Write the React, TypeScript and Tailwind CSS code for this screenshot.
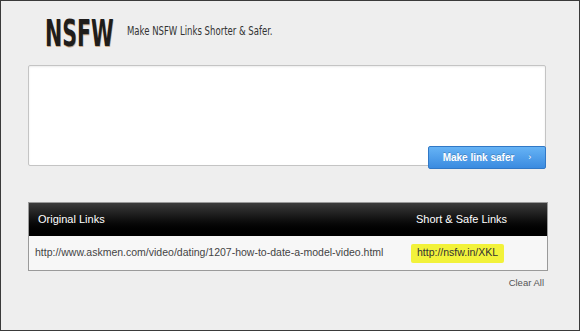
import React from "react";

export default function App() {
  return (
    <div className="w-[580px] h-[331px] overflow-hidden border border-[#3a3a3a] bg-[#eeeeee] font-['Liberation_Sans',Arial,sans-serif]">
      <div className="flex items-center pl-[44px] pt-[14px] h-[36px] box-content">
        <div className="w-[70px] h-[36px] overflow-visible">
          <span className="inline-block origin-left scale-x-[0.6] font-['DejaVu_Sans_Condensed','DejaVu_Sans',sans-serif] font-bold text-[38px] leading-[36px] text-[#1f1d1b] [text-shadow:1px_1px_0_#c9a98a]">
            NSFW
          </span>
        </div>
        <div className="ml-[12px] mt-[-6px] w-[160px] overflow-visible whitespace-nowrap">
          <span className="inline-block origin-left scale-x-[0.79] font-['DejaVu_Sans_Condensed','DejaVu_Sans',sans-serif] text-[12px] text-[#333]">
            Make NSFW Links Shorter &amp; Safer.
          </span>
        </div>
      </div>

      <div className="relative ml-[27px] mt-[14px] w-[518px]">
        <div className="h-[101px] rounded-[2px] border border-[#c4c4c4] bg-white shadow-[inset_0_1px_2px_rgba(0,0,0,0.08)]" />
        <button className="absolute right-0 top-[81px] flex h-[23px] w-[118px] items-center justify-center gap-[14px] rounded-[2px] border border-[#3178c6] bg-gradient-to-b from-[#66b3f5] to-[#3a8be0] text-[10px] font-bold text-white [text-shadow:0_-1px_0_rgba(0,0,0,0.2)]">
          <span>Make link safer</span>
          <span className="text-[9px] font-normal">›</span>
        </button>
      </div>

      <div className="ml-[27px] mt-[36px] w-[520px] border border-[#9a9a9a] bg-[#f7f7f7]">
        <div className="flex h-[33px] items-center bg-gradient-to-b from-[#3c3c3c] via-[#111] to-black text-[11px] text-white">
          <div className="w-[387px] pl-[9px]">Original Links</div>
          <div>Short &amp; Safe Links</div>
        </div>
        <div className="flex h-[34px] items-center text-[10.5px] text-[#444]">
          <div className="w-[382px] pl-[6px] whitespace-nowrap">
            http://www.askmen.com/video/dating/1207-how-to-date-a-model-video.html
          </div>
          <div className="flex h-[19px] items-center rounded-[2px] bg-[#f2f23a] px-[6px] text-[#333]">
            http://nsfw.in/XKL
          </div>
        </div>
      </div>

      <div className="ml-[27px] mt-[5px] w-[516px] text-right text-[9.5px] text-[#555]">
        Clear All
      </div>
    </div>
  );
}
